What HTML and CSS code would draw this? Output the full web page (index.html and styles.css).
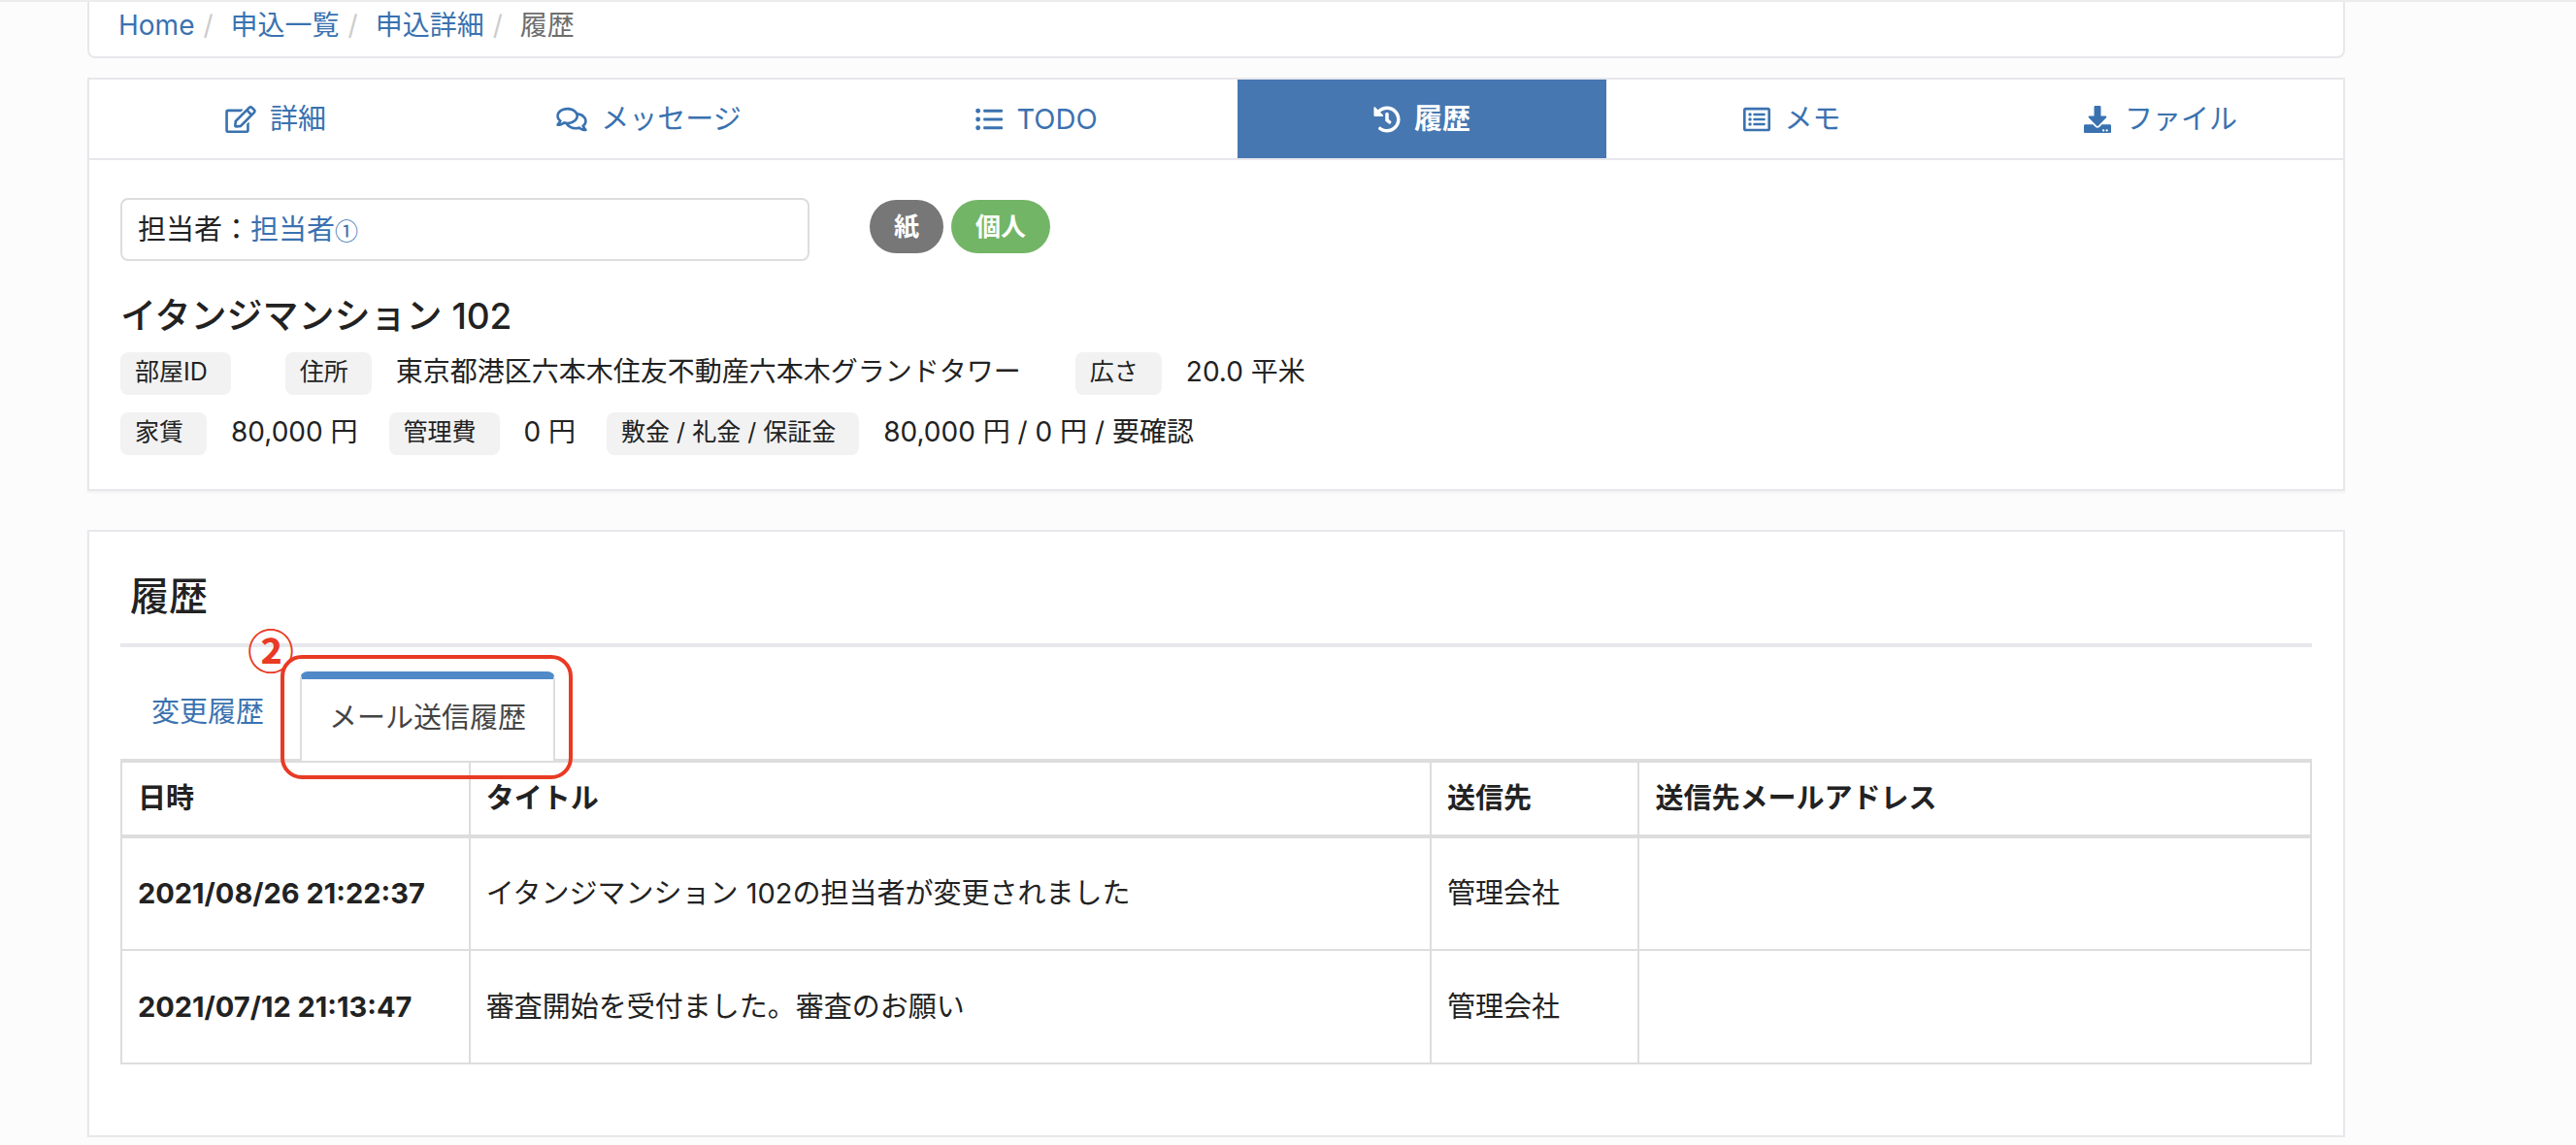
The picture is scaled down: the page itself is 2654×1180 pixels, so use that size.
FILE: index.html
```html
<!DOCTYPE html>
<html lang="ja">
<head>
<meta charset="utf-8">
<meta name="viewport" content="width=device-width, initial-scale=1">
<title>履歴</title>
<link rel="stylesheet" href="styles.css">
</head>
<body>
<main class="page">
  <nav class="breadcrumb" aria-label="パンくず">
    <ol class="breadcrumb-list">
      <li><a href="#">Home</a></li>
      <li><a href="#">申込一覧</a></li>
      <li><a href="#">申込詳細</a></li>
      <li aria-current="page">履歴</li>
    </ol>
  </nav>

  <section class="panel">
    <nav class="main-tabs">
      <a class="main-tab" href="#">
        <svg class="icon icon-wide" viewBox="0 0 576 512" aria-hidden="true"><path d="M402.300 344.900l32-32c5-5 13.700-1.500 13.700 5.700V464c0 26.500-21.500 48-48 48H48c-26.500 0-48-21.500-48-48V112c0-26.500 21.500-48 48-48h273.500c7.100 0 10.700 8.600 5.700 13.700l-32 32c-1.500 1.500-3.500 2.300-5.700 2.300H48v352h352V350.500c0-2.100.8-4.100 2.300-5.600zm156.600-201.800L296.300 405.700l-90.400 10c-26.200 2.900-48.500-19.200-45.600-45.600l10-90.400L432.900 17.100c22.900-22.900 59.900-22.900 82.700 0l43.200 43.200c22.900 22.900 22.900 60 .1 82.800zM460.100 174L402 115.900 216.200 301.800l-7.300 65.300 65.300-7.300L460.100 174zm64.800-79.700l-43.200-43.200c-4.100-4.100-10.800-4.100-14.800 0L436 82l58.100 58.100 30.900-30.900c4-4.200 4-10.800-.1-14.900z"/></svg>詳細</a>
      <a class="main-tab" href="#">
        <svg class="icon icon-wide" viewBox="0 0 576 512" aria-hidden="true"><path d="M532 386.200c27.500-27.100 44-61.100 44-98.200 0-80-76.500-146.100-176.200-157.900C368.300 72.500 294.300 32 208 32 93.100 32 0 103.600 0 192c0 37 16.500 71 44 98.200-15.300 30.700-37.300 54.500-37.700 54.900-6.300 6.700-8.100 16.500-4.400 25 3.600 8.500 12 14 21.200 14 53.500 0 96.700-20.200 125.200-38.800 9.200 2.100 18.700 3.700 28.400 4.900C208.100 407.600 281.800 448 368 448c20.800 0 40.800-2.400 59.800-6.800C456.300 459.700 499.400 480 553 480c9.200 0 17.500-5.500 21.200-14 3.600-8.500 1.900-18.300-4.400-25-.4-.3-22.500-24.100-37.800-54.800zm-392.800-92.300L122.100 305c-14.100 9.100-28.500 16.300-43.100 21.400 2.700-4.700 5.400-9.700 8-14.800l15.500-31.100L77.700 256C64.200 242.600 48 220.700 48 192c0-60.700 73.300-112 160-112s160 51.300 160 112-73.300 112-160 112c-16.500 0-33-1.900-49-5.600l-19.800-4.500zM498.300 352l-24.700 24.400 15.500 31.100c2.600 5.100 5.300 10.100 8 14.800-14.600-5.100-29-12.300-43.100-21.400l-17.100-11.100-19.900 4.600c-16 3.700-32.500 5.600-49 5.600-54 0-102.200-20.100-131.300-49.700C338 339.500 416 272.900 416 192c0-3.400-.4-6.700-.7-10C479.700 196.500 528 238.800 528 288c0 28.700-16.200 50.600-29.700 64z"/></svg>メッセージ</a>
      <a class="main-tab" href="#">
        <svg class="icon" viewBox="0 0 512 512" aria-hidden="true"><circle cx="48" cy="96" r="44"/><circle cx="48" cy="256" r="44"/><circle cx="48" cy="416" r="44"/><rect x="150" y="68" width="362" height="56" rx="14"/><rect x="150" y="228" width="362" height="56" rx="14"/><rect x="150" y="388" width="362" height="56" rx="14"/></svg>TODO</a>
      <a class="main-tab main-tab-active" href="#" aria-current="page">
        <svg class="icon" viewBox="0 0 512 512" aria-hidden="true"><path d="M504 255.500c.3 136.600-111.200 248.400-247.800 248.500-59 0-113.200-20.500-155.800-54.900-11.100-8.900-11.900-25.500-1.800-35.600l11.300-11.300c8.600-8.600 22.400-9.600 31.900-2C173.100 425.100 212.800 440 256 440c101.700 0 184-82.300 184-184 0-101.700-82.300-184-184-184-48.800 0-93.100 19-126.100 49.900l50.800 50.800c10.100 10.100 2.900 27.300-11.300 27.300H24c-8.800 0-16-7.200-16-16V38.600c0-14.300 17.200-21.400 27.300-11.300l49.400 49.400C129.200 34.100 189.600 8 256 8c136.800 0 247.700 110.800 248 247.500zm-180.900 78.800l9.800-12.600c8.100-10.500 6.300-25.500-4.200-33.700L288 256.300V152c0-13.300-10.700-24-24-24h-16c-13.300 0-24 10.700-24 24v135.700l65.400 50.900c10.500 8.100 25.500 6.300 33.700-4.300z"/></svg>履歴</a>
      <a class="main-tab" href="#">
        <svg class="icon" viewBox="0 0 512 512" aria-hidden="true"><path fill-rule="evenodd" d="M48 32h416a48 48 0 0 1 48 48v352a48 48 0 0 1-48 48H48a48 48 0 0 1-48-48V80a48 48 0 0 1 48-48zm0 48v352h416V80z"/><circle cx="128" cy="164" r="32"/><circle cx="128" cy="256" r="32"/><circle cx="128" cy="348" r="32"/><rect x="190" y="142" width="224" height="44" rx="12"/><rect x="190" y="234" width="224" height="44" rx="12"/><rect x="190" y="326" width="224" height="44" rx="12"/></svg>メモ</a>
      <a class="main-tab" href="#">
        <svg class="icon" viewBox="0 0 512 512" aria-hidden="true"><path d="M216 0h80c13.300 0 24 10.700 24 24v168h87.700c17.800 0 26.700 21.500 14.100 34.100L269.700 378.300c-7.500 7.500-19.800 7.500-27.300 0L90.100 226.100c-12.600-12.600-3.700-34.100 14.100-34.100H192V24c0-13.300 10.700-24 24-24zm296 376v112c0 13.300-10.700 24-24 24H24c-13.300 0-24-10.700-24-24V376c0-13.300 10.700-24 24-24h146.700l49 49c20.100 20.100 52.500 20.100 72.600 0l49-49H488c13.300 0 24 10.700 24 24zm-124 88c0-11-9-20-20-20s-20 9-20 20 9 20 20 20 20-9 20-20zm64 0c0-11-9-20-20-20s-20 9-20 20 9 20 20 20 20-9 20-20z"/></svg>ファイル</a>
    </nav>

    <div class="summary">
      <div class="summary-top">
        <p class="assignee">担当者：<a href="#">担当者<span class="circled">①</span></a></p>
        <div class="badges">
          <span class="badge">紙</span>
          <span class="badge badge-green">個人</span>
        </div>
      </div>
      <h1 class="property-name">イタンジマンション 102</h1>
      <dl class="facts facts-wide">
        <div class="fact"><dt>部屋ID</dt><dd></dd></div>
        <div class="fact"><dt>住所</dt><dd>東京都港区六本木住友不動産六本木グランドタワー</dd></div>
        <div class="fact"><dt>広さ</dt><dd>20.0 平米</dd></div>
      </dl>
      <dl class="facts">
        <div class="fact"><dt>家賃</dt><dd>80,000 円</dd></div>
        <div class="fact"><dt>管理費</dt><dd>0 円</dd></div>
        <div class="fact"><dt>敷金 / 礼金 / 保証金</dt><dd>80,000 円 / 0 円 / 要確認</dd></div>
      </dl>
    </div>
  </section>

  <section class="panel history">
    <h2 class="history-title">履歴</h2>
    <nav class="sub-tabs">
      <a class="sub-tab" href="#">変更履歴</a>
      <div class="marked">
        <a class="sub-tab sub-tab-active" href="#" aria-current="page">メール送信履歴</a>
        <span class="mark-frame"></span>
        <span class="mark-number">②</span>
      </div>
    </nav>
    <table class="log">
      <colgroup><col class="col-date"><col class="col-title"><col class="col-to"><col class="col-mail"></colgroup>
      <thead>
        <tr><th scope="col">日時</th><th scope="col">タイトル</th><th scope="col">送信先</th><th scope="col">送信先メールアドレス</th></tr>
      </thead>
      <tbody>
        <tr><th scope="row">2021/08/26 21:22:37</th><td>イタンジマンション 102の担当者が変更されました</td><td>管理会社</td><td></td></tr>
        <tr><th scope="row">2021/07/12 21:13:47</th><td>審査開始を受付ました。審査のお願い</td><td>管理会社</td><td></td></tr>
      </tbody>
    </table>
  </section>
</main>
</body>
</html>
```
FILE: styles.css
```css
* {
  box-sizing: border-box;
}

body {
  margin: 0;
  border-top: 2px solid #ececec;
  background: #fcfcfc;
  color: #222;
  font-family: Inter, "Noto Sans CJK JP", sans-serif;
  font-size: 29px;
  line-height: 40px;
}

a {
  color: #3a72b0;
  text-decoration: none;
}

p, h1, h2, dl, dd, ol {
  margin: 0;
  padding: 0;
}

.page {
  margin: 0 238px 0 90px;
}

.breadcrumb {
  padding: 4px 30px 12px;
  border: 2px solid #e7e7ec;
  border-top: 0;
  border-radius: 0 0 8px 8px;
  background: #fff;
  font-size: 28px;
}

.breadcrumb-list {
  display: flex;
  list-style: none;
  color: #6d6d6d;
}

.breadcrumb-list li + li::before {
  content: "/";
  padding: 0 18px 0 9px;
  color: #ccc;
}

.panel {
  margin-top: 20px;
  border: 2px solid #e7e7ec;
  background: #fff;
  box-shadow: 0 2px 2px rgba(0, 0, 0, 0.04);
}

.main-tabs {
  display: grid;
  grid-template-columns: 384fr 385fr 414fr 380fr 383fr 376fr;
  border-bottom: 2px solid #e7e7ec;
}

.main-tab {
  display: flex;
  align-items: center;
  justify-content: center;
  gap: 14px;
  height: 81px;
}

.main-tab-active {
  background: #4677b1;
  color: #fff;
  font-weight: 700;
}

.icon {
  width: 28px;
  height: 28px;
  fill: currentColor;
}

.icon-wide {
  width: 32px;
}

.summary {
  padding: 39px 32px 35px;
}

.summary-top {
  display: flex;
  align-items: flex-start;
  gap: 62px;
}

.assignee {
  flex: 0 1 710px;
  padding: 11px 16px 10px;
  border: 2px solid #ddd;
  border-radius: 8px;
}

.circled {
  font-family: "Noto Sans CJK JP", sans-serif;
  font-size: 24px;
}

.badges {
  display: flex;
  gap: 8px;
  padding-top: 2px;
}

.badge {
  padding: 0 25px;
  border-radius: 28px;
  background: #777;
  color: #fff;
  font-size: 26px;
  font-weight: 700;
  line-height: 55px;
}

.badge-green {
  background: #73b566;
}

.property-name {
  margin: 32px 0 12px;
  font-size: 37px;
  font-weight: 500;
  line-height: 50px;
}

.facts {
  display: flex;
  flex-wrap: wrap;
  gap: 32px;
  font-size: 28px;
}

.facts-wide {
  gap: 56px;
  margin-bottom: 18px;
}

.fact {
  display: flex;
  gap: 25px;
}

.fact dt {
  padding: 0 24px 4px 15px;
  border-radius: 8px;
  background: #f2f2f2;
  font-size: 25px;
}

.fact dd:empty {
  display: none;
}

.history {
  margin-top: 40px;
  padding: 41px 32px 73px;
}

.history-title {
  padding: 0 10px 22px;
  border-bottom: 4px solid #e7e7ec;
  font-size: 40px;
  font-weight: 500;
  line-height: 52px;
}

.sub-tabs {
  display: flex;
  align-items: flex-start;
  margin-top: 25px;
  border-bottom: 2px solid #ddd;
}

.sub-tab {
  display: block;
  padding: 22px 32px;
}

.marked {
  position: relative;
  margin: 0 0 -2px 5px;
}

.sub-tab-active {
  padding: 20px 28px 24px;
  border: 2px solid #ddd;
  border-top: 8px solid #5089c7;
  border-bottom: 0;
  border-radius: 8px 8px 0 0;
  background: #fff;
  color: #444;
}

.mark-frame {
  position: absolute;
  inset: -17px -18px -19px -20px;
  border: 4px solid #e93a24;
  border-radius: 22px;
}

.mark-number {
  position: absolute;
  top: -50px;
  left: -54px;
  color: #e93a24;
  font-family: "Noto Sans CJK JP", sans-serif;
  font-size: 48px;
  font-weight: 700;
  line-height: 52px;
}

.log {
  width: 100%;
  border-collapse: collapse;
  table-layout: fixed;
  text-align: left;
}

.log th,
.log td {
  height: 117px;
  padding: 0 16px;
  border: 2px solid #ddd;
}

.log thead th {
  height: 77px;
  border-bottom-width: 4px;
}

.col-date { width: 15.9%; }
.col-title { width: 43.9%; }
.col-to { width: 9.5%; }
.col-mail { width: 30.7%; }
```
